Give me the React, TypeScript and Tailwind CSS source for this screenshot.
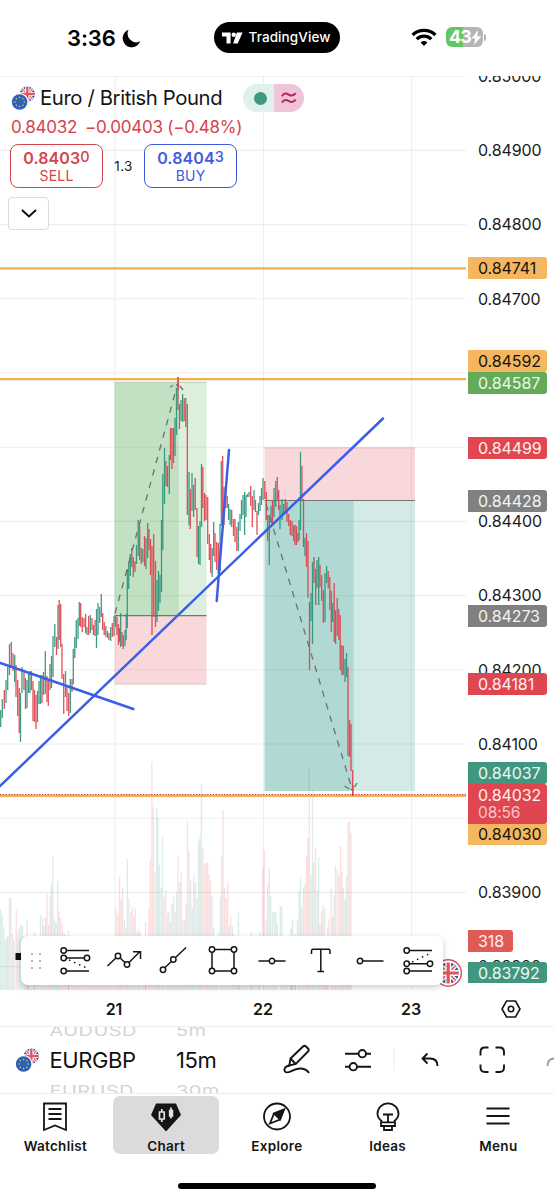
import React from "react";
import type { ReactNode } from "react";

type Bar = [number, number, number, number];

const UP = "#2b9379";
const DOWN = "#df3f4a";

// x, high, low, direction (1 = up, 0 = down)
const candles: Bar[] = [
  [0.7, 710, 727, 1], [2.3, 699, 718, 1], [4.3, 690, 709, 0], [6, 680, 703, 1], [7.7, 667, 690, 1],
  [9.5, 644, 675, 1], [11.3, 642, 667, 0], [13, 653, 671, 0], [14.7, 655, 682, 1], [16, 665, 697, 0],
  [17.7, 680, 716, 0], [19.2, 688, 733, 0], [20.5, 693, 742, 1], [22, 667, 693, 1], [24, 671, 690, 0],
  [25.5, 678, 709, 0], [27, 680, 708, 1], [28.6, 673, 693, 1], [30, 671, 693, 1], [31.5, 671, 690, 0],
  [33, 681, 721, 0], [34.5, 690, 722, 0], [36, 695, 729, 0], [37.5, 691, 722, 1], [39, 681, 704, 1],
  [40.5, 675, 704, 1], [42, 675, 703, 0], [43.5, 672, 695, 1], [45.3, 651, 694, 1], [47, 676, 702, 0],
  [48.3, 680, 706, 0], [50, 664, 690, 1], [51.5, 656, 688, 0], [53, 636, 677, 1], [54.8, 624, 647, 1],
  [56.5, 637, 655, 0], [58, 605, 649, 1], [59.2, 600, 640, 0], [60.7, 604, 647, 0], [62, 644, 679, 0],
  [63.7, 674, 714, 0], [65.5, 671, 697, 1], [67, 687, 711, 0], [68.7, 693, 716, 0], [70.3, 679, 713, 1],
  [72, 679, 692, 0], [73.3, 649, 684, 1], [74.8, 637, 658, 1], [76.3, 620, 648, 1], [78, 618, 639, 1],
  [79.3, 602, 626, 1], [80.7, 603, 627, 0], [82.3, 617, 632, 0], [84, 618, 627, 0], [85.6, 614, 633, 0],
  [87, 627, 635, 1], [88.7, 616, 635, 0], [90.3, 615, 633, 1], [92, 618, 630, 0], [93.5, 625, 635, 0],
  [95, 620, 636, 0], [96.5, 609, 648, 1], [98, 603, 635, 1], [99.7, 607, 623, 1], [101.3, 594, 617, 1],
  [102.7, 613, 630, 0], [104.2, 622, 635, 0], [105.8, 626, 637, 1], [107.5, 631, 638, 0], [109, 633, 640, 0],
  [110.7, 627, 641, 1], [112.3, 623, 637, 0], [114, 616, 636, 1], [115.5, 615, 627, 1], [117, 617, 635, 0],
  [118.5, 624, 645, 0], [119.6, 628, 642, 0], [120.7, 613, 647, 1], [122, 632, 646, 0], [123.3, 635, 649, 0],
  [125, 630, 646, 1], [126.2, 614, 640, 1], [127.3, 569, 628, 1], [128.7, 562, 589, 1], [130.3, 554, 576, 1],
  [131.8, 548, 567, 0], [133.3, 557, 577, 0], [135, 561, 572, 0], [136.5, 545, 564, 1], [138.2, 520, 556, 1],
  [139.7, 526, 560, 0], [141.2, 548, 564, 0], [142.8, 549, 562, 1], [144.5, 536, 566, 0], [146, 538, 569, 1],
  [147.7, 523, 558, 1], [149, 529, 550, 0], [150.5, 539, 575, 0], [152, 546, 635, 0], [153.7, 534, 617, 0],
  [155.5, 561, 627, 0], [157, 580, 622, 1], [158.5, 571, 611, 1], [160, 575, 603, 1], [161.5, 520, 592, 1],
  [162.8, 474, 550, 1], [164.5, 448, 504, 1], [166, 461, 486, 0], [167.5, 466, 487, 0], [169.3, 455, 494, 1],
  [170.5, 428, 460, 0], [172, 428, 469, 0], [173.5, 428, 463, 0], [175, 418, 456, 1], [176.5, 388, 435, 1],
  [178, 377, 410, 0], [179.5, 404, 429, 0], [181, 400, 421, 1], [182.6, 394, 422, 1], [184.2, 398, 421, 0],
  [185.8, 398, 427, 1], [187.3, 404, 515, 0], [189, 472, 525, 1], [190.3, 489, 529, 0], [192, 473, 511, 1],
  [193.6, 485, 517, 1], [195.2, 478, 510, 0], [197, 508, 557, 0], [198.5, 526, 564, 1], [200, 521, 565, 1],
  [201.5, 464, 527, 1], [202.8, 467, 508, 0], [204.5, 493, 521, 0], [206, 495, 520, 0], [207.7, 497, 544, 0],
  [209.3, 534, 560, 0], [210.7, 544, 573, 0], [212.2, 548, 577, 1], [213.7, 522, 556, 1], [215, 533, 562, 0],
  [216.7, 542, 570, 0], [218.3, 543, 573, 0], [220, 524, 571, 1], [221.3, 461, 526, 1], [222.7, 456, 524, 0],
  [224, 487, 525, 0], [225.7, 483, 508, 0], [227.3, 496, 508, 0], [228.6, 504, 520, 1], [230.1, 509, 525, 1],
  [231.7, 510, 527, 0], [233.5, 519, 536, 0], [235, 519, 542, 0], [236.8, 527, 551, 0], [238.3, 522, 551, 1],
  [240, 514, 531, 1], [241.5, 500, 519, 1], [243, 495, 515, 1], [244.6, 492, 535, 1], [246, 495, 517, 1],
  [247.5, 494, 497, 1], [249, 492, 497, 1], [250.7, 486, 506, 0], [252.3, 496, 527, 0], [254, 490, 510, 1],
  [255.5, 500, 512, 0], [257, 511, 535, 0], [258.5, 503, 515, 1], [260, 496, 511, 1], [261.5, 488, 505, 1],
  [263, 478, 500, 1], [264.8, 481, 499, 0], [266.3, 492, 520, 0], [267.7, 515, 541, 0], [269.3, 515, 565, 1],
  [271, 506, 523, 1], [272.5, 501, 525, 0], [274, 488, 517, 1], [275.7, 481, 507, 1], [277.3, 477, 500, 0],
  [278.7, 490, 510, 0], [280, 505, 529, 1], [282, 499, 520, 1], [283.7, 504, 513, 1], [285.3, 499, 512, 0],
  [287, 502, 522, 0], [288.7, 514, 526, 0], [290.3, 520, 535, 0], [292, 521, 536, 0], [293.7, 525, 541, 1],
  [295, 525, 545, 0], [296.5, 526, 545, 0], [298, 533, 542, 0], [299.1, 520, 540, 1], [300.5, 452, 530, 1],
  [301.9, 466, 500, 0], [303.5, 499, 547, 0], [305, 538, 556, 1], [306.5, 533, 567, 0], [308, 541, 598, 0],
  [309.5, 602, 670, 0], [311, 593, 621, 1], [312.5, 562, 644, 1], [314, 557, 583, 0], [315.7, 569, 605, 0],
  [317, 560, 588, 1], [318.7, 557, 605, 1], [320, 565, 587, 0], [321.7, 575, 601, 0], [323.3, 590, 623, 0],
  [325, 573, 622, 1], [326.6, 566, 583, 1], [328.2, 571, 588, 0], [329.8, 577, 610, 0], [331.3, 591, 632, 0],
  [332.7, 603, 622, 1], [334.2, 583, 642, 0], [335.6, 610, 644, 1], [337.2, 598, 636, 0], [338.8, 609, 640, 0],
  [340.2, 615, 670, 0], [341.8, 645, 675, 0], [343.3, 646, 675, 0], [345, 659, 682, 1], [346.5, 653, 677, 1],
  [348, 667, 756, 0], [349.6, 720, 757, 0], [351, 724, 771, 0], [352.7, 770, 795, 0],
];

// x, top, direction
const volumes: [number, number, number][] = [
  [0.7, 909, 1], [2.2, 915, 1], [3.7, 927, 1], [5.2, 940, 1], [6.7, 937, 1], [8, 936, 1], [9.5, 898, 0],
  [11, 898, 1], [12.6, 934, 0], [14, 940, 1], [16.2, 910, 0], [17.8, 932, 1], [19.5, 928, 1], [21, 924, 1],
  [22.5, 926, 1], [24, 936, 0], [27, 919, 1], [28.5, 938, 0], [34.5, 932, 0], [40.5, 915, 1], [42.5, 918, 0],
  [44, 926, 1], [45.5, 918, 1], [47, 893, 0], [48.5, 925, 0], [50.2, 896, 0], [51.4, 884, 1], [52.9, 857, 1],
  [54.5, 919, 1], [56, 923, 1], [57.6, 881, 1], [59, 911, 0], [60.5, 918, 0], [62.3, 924, 0], [64, 933, 0],
  [65.5, 935, 1], [68.5, 931, 0], [116.3, 909, 0], [118, 915, 0], [119.5, 877, 0], [121, 900, 0],
  [122.5, 888, 0], [124.3, 920, 1], [126, 928, 0], [127.3, 859, 1], [128.8, 899, 1], [130.5, 912, 0],
  [132.3, 907, 0], [133.7, 916, 1], [135.3, 908, 0], [137, 932, 1], [138.5, 929, 1], [140.3, 932, 0],
  [145.5, 922, 1], [148.7, 909, 0], [150.3, 860, 0], [151.9, 762, 0], [153.3, 807, 0], [155, 872, 0],
  [156.6, 808, 1], [158, 818, 1], [159.3, 865, 1], [161, 888, 1], [162.5, 837, 1], [164, 897, 0],
  [165.7, 890, 0], [167.5, 913, 1], [169, 912, 0], [170.5, 922, 1], [172, 904, 1], [173.5, 897, 1],
  [175.3, 912, 0], [176.6, 892, 1], [178, 856, 0], [179.7, 882, 0], [181.3, 872, 1], [183, 920, 1],
  [184.5, 920, 0], [186, 904, 1], [187.5, 821, 0], [189, 851, 0], [190.7, 880, 1], [192.3, 908, 1],
  [193.7, 875, 1], [195.3, 882, 0], [197, 898, 1], [198.5, 841, 1], [199.9, 838, 1], [201.3, 784, 1],
  [202.9, 848, 0], [204.5, 865, 0], [206, 863, 0], [207.5, 862, 0], [209, 874, 0], [210.5, 881, 0],
  [212.2, 896, 1], [213.6, 928, 1], [218, 933, 1], [220.3, 897, 1], [221.7, 857, 1], [223.1, 810, 0],
  [224.6, 888, 0], [226.2, 898, 0], [227.7, 883, 0], [229.2, 926, 1], [230.8, 916, 0], [232.5, 926, 1],
  [234, 934, 0], [238.5, 912, 1], [251.5, 932, 0], [260, 932, 1], [262.7, 867, 0], [264.3, 850, 0],
  [266, 921, 1], [267.6, 884, 0], [269.3, 869, 1], [270.8, 896, 1], [272.5, 912, 1], [274.2, 912, 1],
  [275.7, 912, 1], [277.3, 923, 0], [280.3, 906, 1], [281.8, 906, 1], [291, 927, 1], [292.5, 920, 1],
  [295.5, 934, 1], [297.5, 920, 0], [299, 891, 1], [300.5, 877, 1], [301.9, 907, 0], [303.5, 888, 0],
  [305, 884, 0], [306.5, 856, 0], [308, 838, 0], [309.3, 767, 0], [311, 875, 1], [312.5, 790, 1],
  [314, 862, 0], [315.5, 848, 0], [317.2, 890, 1], [318.6, 857, 1], [320, 924, 1], [321.5, 911, 0],
  [323, 905, 0], [324.5, 908, 1], [327.5, 928, 0], [329, 919, 0], [331.2, 888, 0], [332.6, 917, 0],
  [334, 895, 1], [335.5, 866, 1], [337.3, 870, 0], [339, 875, 0], [340.5, 846, 0], [342, 872, 0],
  [343.5, 888, 1], [345, 900, 1], [346.5, 876, 1], [348, 822, 0], [349.5, 822, 0], [351, 833, 0],
];

// quiet hours, one low bar every 15 minutes
const quietRanges = [[25, 39], [67, 115], [142, 148], [215, 217], [235, 261], [283, 296], [325, 327]];
const quietBars = quietRanges.flatMap(([from, to]) => {
  const xs: number[] = [];
  for (let x = from; x < to; x += 1.55) xs.push(x);
  return xs;
});

const hLines = [76.3, 150.4, 224.6, 298.8, 373, 447.2, 521.4, 595.6, 669.8, 744, 818.2, 892.4, 966.6];
const vLines = [115, 263.5, 411.5];

const ticks = [
  "0.85000", "0.84900", "0.84800", "0.84700", "", "", "0.84400",
  "0.84300", "0.84200", "0.84100", "", "0.83900", "0.83800",
];

const tags = [
  { text: "0.84741", style: "top-[181px] h-[22px] bg-[#f4b75f] text-[#17130c]" },
  { text: "0.84592", style: "top-[274px] h-[22px] bg-[#f4b75f] text-[#17130c]" },
  { text: "0.84587", style: "top-[296px] h-[22px] bg-[#63ab58] text-[#edf8ea]" },
  { text: "0.84499", style: "top-[361px] h-[22px] bg-[#df464f] text-[#fff0f0]" },
  { text: "0.84428", style: "top-[414px] h-[22px] bg-[#808080] text-[#f4f4f4]" },
  { text: "0.84273", style: "top-[529px] h-[22px] bg-[#808080] text-[#f4f4f4]" },
  { text: "0.84181", style: "top-[597px] h-[22px] bg-[#df464f] text-[#fff0f0]" },
  { text: "0.84037", style: "top-[686px] h-[22px] bg-[#41967f] text-[#ecf8f4]" },
  { text: "0.84030", style: "top-[747px] h-[22px] bg-[#f4b75f] text-[#17130c]" },
  { text: "0.83792", style: "top-[886px] h-[21px] bg-[#41967f] text-[#ecf8f4]" },
];

function UnionJack({ id, cx, cy, r }: { id: string; cx: number; cy: number; r: number }) {
  return (
    <g>
      <clipPath id={id}>
        <circle cx={cx} cy={cy} r={r} />
      </clipPath>
      <g clipPath={`url(#${id})`}>
        <g transform={`translate(${cx} ${cy}) scale(${r / 10})`}>
          <rect x="-10" y="-10" width="20" height="20" fill="#3553b0" />
          <path d="M-10-10 10 10M10-10-10 10" stroke="#fff" strokeWidth="4" />
          <path d="M-10-10 10 10M10-10-10 10" stroke="#e0565c" strokeWidth="1.5" />
          <path d="M0-10V10M-10 0H10" stroke="#fff" strokeWidth="5.5" />
          <path d="M0-10V10M-10 0H10" stroke="#e0565c" strokeWidth="3" />
        </g>
      </g>
    </g>
  );
}

function PairFlag({ id }: { id: string }) {
  const stars = Array.from({ length: 8 }, (_, i) => (i * Math.PI) / 4);
  return (
    <svg width="25" height="25" viewBox="0 0 25 25" className="shrink-0">
      <UnionJack id={id} cx={16.3} cy={8} r={7.6} />
      <circle cx="8.6" cy="16" r="9" fill="#fff" />
      <circle cx="8.6" cy="16" r="7.8" fill="#2f62b4" />
      {stars.map((a) => (
        <circle key={a} cx={8.6 + 4.6 * Math.cos(a)} cy={16 + 4.6 * Math.sin(a)} r="0.75" fill="#d9d36b" />
      ))}
    </svg>
  );
}

function StatusBar() {
  return (
    <div className="flex h-[76px] shrink-0 items-center">
      <div className="ml-[67px] w-[50px] whitespace-nowrap text-[22px] font-semibold leading-none tracking-[-0.1px]">3:36</div>
      <svg width="19" height="19" viewBox="0 0 19 19" className="ml-[5px]">
        <path d="M6.6.8a9 9 0 1 0 11.6 11.5A8.6 8.6 0 0 1 6.6.8z" fill="#000" />
      </svg>
      <div className="-mt-px ml-[73px] flex h-[31px] w-[126px] items-center rounded-full bg-black text-white">
        <svg width="21" height="12" viewBox="0 0 21 12" className="ml-2">
          <path d="M0 .5h8.6v11H4.5V4.6H0zM14.9.5h5.7l-4.9 11h-4.6z" fill="#fff" />
          <circle cx="11.7" cy="2.7" r="2.2" fill="#fff" />
        </svg>
        <span className="ml-[5.5px] whitespace-nowrap text-[13.5px] font-medium tracking-[0.1px]">TradingView</span>
      </div>
      <svg width="26" height="19" viewBox="0 0 26 19" className="-mt-px ml-[71px]" fill="none" stroke="#000" strokeWidth="3.2">
        <path d="M1.6 7a16.3 16.3 0 0 1 22.8 0" />
        <path d="M5.7 11.1a10.4 10.4 0 0 1 14.6 0" />
        <path d="M13 18l-3.4-3.6a4.9 4.9 0 0 1 6.8 0z" fill="#000" stroke="none" />
      </svg>
      <div className="-mt-[2px] ml-[9px] flex h-5 w-[37px] items-center rounded-[6px] bg-linear-to-r from-[#62c763] from-45% to-[#b5b5b5] to-45% pl-[3px] text-[18px] font-bold leading-none text-white">
        <span className="tracking-[-0.8px]">43</span>
        <svg width="11" height="15" viewBox="0 0 10 15" className="shrink-0">
          <path d="M6.5 0 0 8.4h3.5L2.6 15 10 6.2H5.8z" fill="#fff" />
        </svg>
      </div>
      <div className="-mt-[2px] ml-px h-[7px] w-[2px] rounded-r bg-[#b5b5b5]" />
    </div>
  );
}

function Plot() {
  return (
    <svg width="466" height="914" viewBox="0 76 466 914" className="shrink-0">
      <g stroke="#eeeeee" strokeWidth="1.1">
        {hLines.map((y) => <path key={y} d={`M0 ${y}H466`} />)}
        {vLines.map((x) => <path key={x} d={`M${x} 76V990`} />)}
      </g>

      {/* long position */}
      <rect x="114.5" y="382.5" width="92" height="233" fill="#4caf50" fillOpacity="0.2" />
      <rect x="114.5" y="382.5" width="64.3" height="233" fill="#4f9f4b" fillOpacity="0.18" />
      <rect x="114.5" y="615.5" width="92" height="68.5" fill="#e04c5c" fillOpacity="0.22" />
      <path d="M114.5 382.3H206.5" stroke="#b5cdb4" />
      <path d="M114.5 684H206.5" stroke="#e6bcc1" />
      <path d="M114.5 615.7H206.5" stroke="#747474" strokeWidth="1.2" />

      {/* short position */}
      <rect x="264.5" y="447.7" width="150.5" height="52.8" fill="#e04c5c" fillOpacity="0.22" />
      <rect x="264.5" y="500.5" width="150.5" height="290.5" fill="#219680" fillOpacity="0.2" />
      <rect x="264.5" y="500.5" width="89" height="290.5" fill="#219680" fillOpacity="0.2" />
      <path d="M264.5 447.9H415" stroke="#e3babf" />
      <path d="M264.5 500.5H415" stroke="#747474" strokeWidth="1.2" />

      <g fillOpacity="0.17">
        {quietBars.map((x, i) => (
          <rect key={x} x={x - 0.6} y={948 + (i % 5) * 3} width="1.2" height="44" fill={i % 3 ? DOWN : UP} />
        ))}
        {volumes.map(([x, top, up]) => (
          <rect key={x} x={x - 0.65} y={top} width="1.3" height={990 - top} fill={up ? UP : DOWN} />
        ))}
      </g>

      {candles.map(([x, high, low, up]) => (
        <rect key={x} x={x - 0.65} y={high} width="1.3" height={low - high} fill={up ? UP : DOWN} fillOpacity="0.92" />
      ))}

      <g stroke="#6d716d" strokeWidth="1.3" fill="none">
        <path d="M115 613.5 176.5 388" strokeDasharray="6.5 6.5" />
        <path d="M170 387l3-1.5M176 385l3-.4M180 386l3 4" />
        <path d="M266 504 352 789" strokeDasharray="6.5 6.5" />
        <path d="M344.5 786l5 3M351 789.5l2.5-.5M354.5 787l2.5-4" />
      </g>

      <g stroke="#f2ae55" strokeWidth="2.3">
        <path d="M0 268.3H466M0 379.2H466M0 795.8H466" />
      </g>
      <path d="M178.1 377V390M352.7 785V796" stroke={DOWN} strokeWidth="1.3" />
      <path d="M0 794.5H466" stroke="#c2392f" strokeWidth="1.2" strokeDasharray="1.3 1.5" />

      <g stroke="#3a5ee6" strokeWidth="2.5" strokeLinecap="round">
        <path d="M-2 788 383 418.5" />
        <path d="M-1 662.5 133.3 709" />
        <path d="M229 450 216.7 601" />
      </g>

      <rect x="15.5" y="953" width="6" height="7" fill="#111" />
      <circle cx="448.2" cy="973" r="13.2" fill="#fff" stroke="#e04c54" strokeWidth="1.4" />
      <UnionJack id="event-flag" cx={448.2} cy={973} r={10.6} />
    </svg>
  );
}

function PriceAxis() {
  return (
    <div className="relative h-full w-[88px] overflow-hidden text-[16px] tracking-[-0.1px]">
      <div className="-mt-[37px] flex flex-col pl-3 text-[#1b1b1b]">
        {ticks.map((tick, i) => (
          <div key={i} className="flex h-[74.2px] shrink-0 items-center">{tick}</div>
        ))}
      </div>
      {tags.map((tag) => (
        <div key={tag.text} className={`absolute left-[1.5px] flex w-[79.5px] items-center rounded-r-[3px] pl-[10.5px] ${tag.style}`}>
          {tag.text}
        </div>
      ))}
      <div className="absolute left-[1.5px] top-[708px] flex h-[39.5px] w-[79.5px] flex-col rounded-r-[3px] bg-[#df464f] pl-[10.5px] text-[#fff0f0]">
        <span className="mt-px leading-[20px]">0.84032</span>
        <span className="text-[15.5px] leading-[16px] text-[#f9c6c8]">08:56</span>
      </div>
      <div className="absolute left-[1.5px] top-[854px] flex h-[22px] w-[45.5px] items-center rounded-r-[3px] bg-[#df5c56] pl-[10.5px] text-[16px] text-[#fff0ee]">318</div>
    </div>
  );
}

function QuoteButton({ label, price, pip, color }: { label: string; price: string; pip: string; color: string }) {
  return (
    <div className={`flex h-[44px] w-[93px] flex-col items-center rounded-[8px] border-[1.5px] bg-white ${color}`}>
      <div className="mt-[3.5px] flex text-[16px] font-semibold leading-[19px] tracking-[0.1px]">
        {price}
        <span className="-mt-[1.5px] text-[14.5px] font-medium">{pip}</span>
      </div>
      <div className="-mt-[0.5px] text-[14px] leading-[17px] tracking-[0.2px]">{label}</div>
    </div>
  );
}

function Legend() {
  return (
    <div className="absolute left-0 top-0 flex flex-col">
      <div className="mt-[8px] flex h-[28px] items-center pl-[11px]">
        <PairFlag id="legend-flag" />
        <span className="ml-[4px] w-[203px] whitespace-nowrap text-[20.3px] tracking-[-0.38px] text-[#151515]">Euro / British Pound</span>
        <div className="flex h-[28px] w-[61px] overflow-hidden rounded-full">
          <div className="flex w-[31px] items-center justify-center bg-[#dff0ed]">
            <div className="mr-[-3px] size-[13px] rounded-full bg-[#3d987f]" />
          </div>
          <div className="flex flex-1 items-center justify-center bg-[#efc3d8]">
            <svg width="16" height="14" viewBox="0 0 16 14" fill="none" stroke="#b52560" strokeWidth="2">
              <path d="M1 5.2c2-3.5 4.5-3 6.700-1.600s4.500 1.800 7-1.400M1 11.600c2-3.500 4.500-3 6.700-1.600s4.500 1.800 7-1.400" />
            </svg>
          </div>
        </div>
      </div>
      <div className="mt-[6px] flex h-[20px] items-center gap-[8px] whitespace-nowrap pl-[11px] text-[17px] tracking-[-0.26px] text-[#d5434d]">
        <span>0.84032</span>
        <span>−0.00403 (−0.48%)</span>
      </div>
      <div className="mt-[6px] flex h-[44px] items-center pl-[10px]">
        <QuoteButton label="SELL" price="0.8403" pip="0" color="border-[#d5434d] text-[#d5434d]" />
        <span className="w-[41px] text-center text-[13.5px] tracking-[0.3px] text-[#222]">1.3</span>
        <QuoteButton label="BUY" price="0.8404" pip="3" color="border-[#3f5be0] text-[#3f5be0]" />
      </div>
      <div className="ml-[8px] mt-[9px] flex h-[33px] w-[41px] items-center justify-center rounded-[4px] border border-[#dcdcdc] bg-white">
        <svg width="16" height="9" viewBox="0 0 16 9" fill="none" stroke="#111" strokeWidth="2">
          <path d="M1 1l7 6.5L15 1" />
        </svg>
      </div>
    </div>
  );
}

function Tool({ children }: { children: ReactNode }) {
  return (
    <svg width="36" height="34" viewBox="-18 -17 36 34" fill="none" stroke="#151515" strokeWidth="1.5">
      {children}
    </svg>
  );
}

function Dot({ x, y }: { x: number; y: number }) {
  return <circle cx={x} cy={y} r="2.7" fill="#fff" />;
}

function DrawingToolbar() {
  return (
    <div className="absolute left-[21px] top-[860px] flex h-[49px] w-[422px] items-center rounded-[7px] bg-white pl-[10px] shadow-[0_2px_6px_rgba(0,0,0,0.22)]">
      <div className="grid grid-cols-2 gap-x-[6px] gap-y-[5px]">
        {[0, 1, 2, 3, 4, 5].map((i) => <i key={i} className="size-[2px] bg-[#b4b4b4]" />)}
      </div>
      <div className="ml-[16px] flex gap-[13.2px]">
        <Tool>
          <path d="M-11-10.5H14M-11-3H12M-11 10H14" />
          <path d="M-6-1 13 7.5" strokeDasharray="1.5 4" />
          <Dot x={-11.3} y={-10.5} /><Dot x={-11.3} y={-3} /><Dot x={12} y={-3} /><Dot x={-11.3} y={10} />
        </Tool>
        <Tool>
          <path d="M-16.5 5-6-5 3 3.5 16-9.5M9-9.3H16.5V-2" />
          <Dot x={-6} y={-5} /><Dot x={3} y={3.5} />
        </Tool>
        <Tool>
          <path d="M-10 8.5 13-13.5" />
          <Dot x={-10} y={8.7} /><Dot x={0.3} y={-1.5} />
        </Tool>
        <Tool>
          <path d="M-11-11.5H11V10H-11z" />
          <Dot x={-11} y={-11.5} /><Dot x={11} y={-11.5} /><Dot x={-11} y={10} /><Dot x={11} y={10} />
        </Tool>
        <Tool>
          <path d="M-13.5 0H13.5" />
          <Dot x={0} y={0} />
        </Tool>
        <Tool>
          <path d="M-9.5-7V-10Q-9.5-11.7-8-11.7H7.5Q9-11.7 9-10V-7M-.2-11.7V10.5M-3.5 10.5H3" />
        </Tool>
        <Tool>
          <path d="M-10 0H13.5" />
          <Dot x={-10} y={0} />
        </Tool>
        <Tool>
          <path d="M-12-10.5H13M-12 2.7H11M-12 10H13" />
          <path d="M-7 1 12-8" strokeDasharray="1.5 4" />
          <Dot x={-12.3} y={-10.5} /><Dot x={-12.3} y={2.7} /><Dot x={11} y={2.7} /><Dot x={-12.3} y={10} />
        </Tool>
      </div>
    </div>
  );
}

function TimeAxis() {
  return (
    <div className="flex h-[36px] shrink-0 items-center pt-px text-[16px] font-semibold text-[#151515]">
      <span className="ml-[94px] w-[40px] text-center">21</span>
      <span className="ml-[109px] w-[40px] text-center">22</span>
      <span className="ml-[108px] w-[40px] text-center">23</span>
      <svg width="20" height="18" viewBox="0 0 20 18" className="ml-[70px]" fill="none" stroke="#151515" strokeWidth="1.6">
        <path d="M5.500 1h9L19 9l-4.500 8h-9L1 9z" />
        <circle cx="10" cy="9" r="2.7" />
      </svg>
    </div>
  );
}

function Wheel({ prev, value, next, width }: { prev: string; value: string; next: string; width: string }) {
  return (
    <div className={`flex h-full flex-col overflow-hidden whitespace-nowrap text-[#111] ${width}`}>
      <div className="-mt-[6px] h-[20px] origin-left scale-y-[0.75] text-[20px] leading-[20px] tracking-[0.4px] text-[#d4d4d4]">{prev}</div>
      <div className="mt-[3px] h-[32px] text-[22px] leading-[32px] tracking-[-0.4px]">{value}</div>
      <div className="mt-[4.5px] h-[20px] origin-left scale-y-[0.75] text-[20px] leading-[20px] tracking-[0.4px] text-[#d4d4d4]">{next}</div>
    </div>
  );
}

function SymbolBar() {
  return (
    <div className="flex h-[68px] shrink-0 overflow-hidden border-y border-[#ededed]">
      <div className="flex w-[49.5px] items-center pl-[15px]">
        <PairFlag id="symbol-flag" />
      </div>
      <Wheel prev="AUDUSD" value="EURGBP" next="EURUSD" width="w-[126.500px]" />
      <Wheel prev="5m" value="15m" next="30m" width="w-[100px]" />
      <svg width="278" height="66" viewBox="276 1027 278 66" fill="none" stroke="#151515" strokeWidth="1.9">
        <path d="M290.5 1058.5 303 1046.5Q304.5 1045 306 1046.5L308 1048.5Q309.5 1050 308 1051.5L295.8 1064 289.3 1065.5zM290.5 1058.5l5.3 5.5" />
        <path d="M290 1065.5C284.5 1066 283.5 1069.5 285 1071.5C288 1075.5 293 1067.5 301 1068.5C305.5 1069 307.5 1070.5 309 1073" />
        <path d="M345 1053.7H371M345 1066.7H371" />
        <circle cx="362.3" cy="1053.7" r="3.7" fill="#fff" />
        <circle cx="353.3" cy="1066.7" r="3.7" fill="#fff" />
        <path d="M394 1048V1071" stroke="#eeeeee" strokeWidth="1" />
        <path d="M427.5 1053.5 422.5 1058.5 427.5 1063.5M423 1058.5H430Q437.5 1058.5 437.5 1066" />
        <path d="M480.500 1055.500V1052Q480.500 1047.500 485 1047.500H488.500M495.500 1047.500H499.500Q504 1047.500 504 1052V1055.500M504 1064.500V1067.500Q504 1072 499.500 1072H495.500M488.500 1072H485Q480.500 1072 480.500 1067.500V1064.500" />
        <path d="M547.500 1066Q547.500 1059 554 1058.500" stroke="#999" />
      </svg>
    </div>
  );
}

function Tab({ label, active, children }: { label: string; active?: boolean; children: ReactNode }) {
  return (
    <div className="flex w-[110.75px] justify-center pt-[2px]">
      <div className={`flex h-[58px] w-[106px] flex-col items-center rounded-[7px] ${active ? "bg-[#dbdbdb]" : ""}`}>
        <svg width="32" height="30" viewBox="-16 -15 32 30" className="mt-[6px] shrink-0" fill="none" stroke="#151515" strokeWidth="1.8">
          {children}
        </svg>
        <span className="mt-[5px] text-[13.5px] font-semibold leading-[18px] tracking-[0.3px] text-[#151515]">{label}</span>
      </div>
    </div>
  );
}

function TabBar() {
  return (
    <div className="flex h-[89px] shrink-0">
      <Tab label="Watchlist">
        <path d="M-11-13.5H11V13L0 8.5-11 13zM-6.5-8H6.5M-6.5-3H6.5M-6.5 2H6.5" />
      </Tab>
      <Tab label="Chart" active>
        <path d="M-10-13.5H10L15-2 0 14.5-15-2z" fill="#151515" stroke="none" />
        <g stroke="#e4e4e4" strokeWidth="1.7">
          <path d="M-6.5-5H-1.8V2H-6.5zM-4.2-8V-5M-4.2 2V5" />
          <path d="M5-9.5V1.5M3.7-6.5H6.4V-1H3.7z" fill="#e4e4e4" />
        </g>
      </Tab>
      <Tab label="Explore">
        <circle cx="0" cy="-0.5" r="13" />
        <path d="M7-7.5 3 2.5-7 6.5-3-3.5z" />
        <path d="M7-7.5 3 2.5-3-3.5z" fill="#151515" />
      </Tab>
      <Tab label="Ideas">
        <path d="M-6.5 5.5V4C-9 2-10.5-.5-10.5-3.2A10.5 10.5 0 0 1 10.5-3.2C10.5-.5 9 2 6.5 4V5.5M-7 5.3H7V9H-7zM-4 9V13H4V9M0 5V-2.5M-5-2.5H5" />
      </Tab>
      <Tab label="Menu">
        <path d="M-11.5-8.5H11.5M-11.5-1H11.5M-11.5 6.5H11.5" />
      </Tab>
    </div>
  );
}

export default function App() {
  return (
    <div className="flex h-[1200px] w-[554px] flex-col overflow-hidden bg-white font-['Inter','Liberation_Sans',sans-serif] text-black">
      <StatusBar />
      <div className="relative flex h-[914px] shrink-0">
        <Plot />
        <PriceAxis />
        <Legend />
        <DrawingToolbar />
      </div>
      <TimeAxis />
      <SymbolBar />
      <TabBar />
      <div className="mx-auto h-[6px] w-[198px] rounded-full bg-black" />
    </div>
  );
}
